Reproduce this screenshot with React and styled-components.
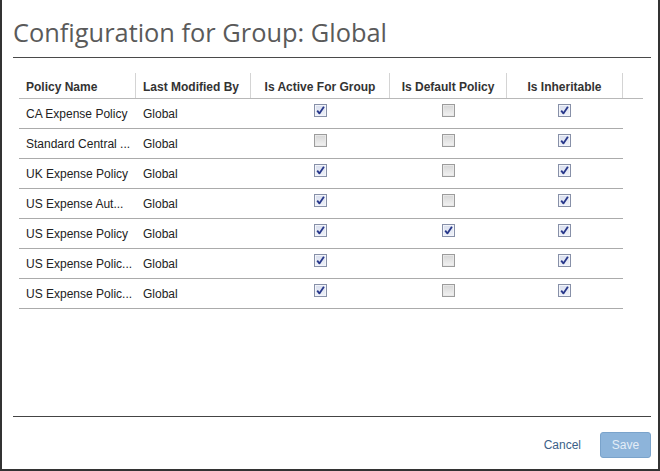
import React from "react";
import styled, { createGlobalStyle } from "styled-components";

const GlobalStyle = createGlobalStyle`
  html, body {
    margin: 0;
    padding: 0;
    background: #ffffff;
  }
  body {
    font-family: "Liberation Sans", Arial, sans-serif;
  }
`;

const COLS = "117px 115px 139px 117px 116px";

const policies = [
  { name: "CA Expense Policy", by: "Global", active: true, def: false, inherit: true },
  { name: "Standard Central ...", by: "Global", active: false, def: false, inherit: true },
  { name: "UK Expense Policy", by: "Global", active: true, def: false, inherit: true },
  { name: "US Expense Aut...", by: "Global", active: true, def: false, inherit: true },
  { name: "US Expense Policy", by: "Global", active: true, def: true, inherit: true },
  { name: "US Expense Polic...", by: "Global", active: true, def: false, inherit: true },
  { name: "US Expense Polic...", by: "Global", active: true, def: false, inherit: true },
];

const Dialog = styled.div`
  width: 660px;
  height: 471px;
  box-sizing: border-box;
  border: 2px solid #333333;
  border-top: 0;
  padding: 0 7px 0 11px;
  display: flex;
  flex-direction: column;
  background: #ffffff;
`;

const TitleBar = styled.div`
  padding: 15px 0 8px 0;
  border-bottom: 1px solid #4a4a4a;
`;

const Title = styled.h1`
  margin: 0;
  font-family: "Open Sans", "Noto Sans", sans-serif;
  font-weight: 400;
  font-size: 25.4px;
  line-height: 34px;
  color: #5a5a5a;
`;

const Table = styled.div`
  width: 624px;
  margin: 15px 0 0 6px;
`;

const HeaderRow = styled.div`
  display: grid;
  grid-template-columns: ${COLS} 20px;
  border-bottom: 1px solid #b8b8b8;
`;

const HeaderCell = styled.div`
  height: 25px;
  box-sizing: border-box;
  padding: 7px 7px 0;
  border-right: ${(p) => (p.$last ? "0" : "1px solid #d4d4d4")};
  font-size: 12px;
  line-height: 14px;
  font-weight: 700;
  color: #333333;
  text-align: ${(p) => (p.$center ? "center" : "left")};
  white-space: nowrap;
`;

const Row = styled.div`
  display: grid;
  grid-template-columns: ${COLS};
  width: 604px;
  height: 30px;
  box-sizing: border-box;
  border-bottom: 1px solid #ababab;
`;

const Cell = styled.div`
  padding: 0 7px;
  display: flex;
  align-items: center;
  font-size: 12px;
  line-height: 14px;
  color: #222222;
  white-space: nowrap;
`;

const CheckCell = styled.div`
  display: flex;
  justify-content: center;
  align-items: flex-start;
  padding-top: 5px;
  padding-right: 1px;
`;

const Box = styled.span`
  width: 13px;
  height: 13px;
  box-sizing: border-box;
  border: 1px solid ${(p) => (p.$checked ? "#8790a8" : "#9c9c9c")};
  background: ${(p) =>
    p.$checked
      ? "linear-gradient(#d9dfee, #eef1f8)"
      : "linear-gradient(#d6d6d6, #f2f2f2)"};
  box-shadow: inset 0 0 0 1px ${(p) => (p.$checked ? "#f2f4fa" : "#e8e8e8")};
  display: flex;
  align-items: center;
  justify-content: center;
`;

const CheckBox = ({ checked }) => (
  <Box $checked={checked}>
    {checked && (
      <svg width="9" height="9" viewBox="0 0 9 9">
        <path
          d="M1.2 4.6 L3.4 7.4 L7.9 0.8"
          fill="none"
          stroke="#27378a"
          strokeWidth="1.8"
          strokeLinejoin="round"
        />
      </svg>
    )}
  </Box>
);

const Spacer = styled.div`
  flex: 1;
`;

const Footer = styled.div`
  border-top: 1px solid #444444;
  padding: 15px 0 11px;
  display: flex;
  justify-content: flex-end;
  align-items: center;
  gap: 19px;
`;

const LinkButton = styled.button`
  border: 0;
  background: none;
  padding: 0;
  font-family: "Liberation Sans", Arial, sans-serif;
  font-size: 12px;
  color: #3c5f88;
  cursor: pointer;
`;

const SaveButton = styled.button`
  width: 51px;
  height: 26px;
  border: 1px solid #7aa3cb;
  border-radius: 3px;
  background: #8db4da;
  color: #e4edf7;
  font-family: "Liberation Sans", Arial, sans-serif;
  font-size: 12px;
  padding: 0;
`;

const App = () => {
  return (
    <>
      <GlobalStyle />
      <Dialog>
        <TitleBar>
          <Title>Configuration for Group: Global</Title>
        </TitleBar>
        <Table>
          <HeaderRow>
            <HeaderCell>Policy Name</HeaderCell>
            <HeaderCell>Last Modified By</HeaderCell>
            <HeaderCell $center>Is Active For Group</HeaderCell>
            <HeaderCell $center>Is Default Policy</HeaderCell>
            <HeaderCell $center>Is Inheritable</HeaderCell>
            <HeaderCell $last />
          </HeaderRow>
          {policies.map((p, i) => (
            <Row key={i}>
              <Cell>{p.name}</Cell>
              <Cell>{p.by}</Cell>
              <CheckCell>
                <CheckBox checked={p.active} />
              </CheckCell>
              <CheckCell>
                <CheckBox checked={p.def} />
              </CheckCell>
              <CheckCell>
                <CheckBox checked={p.inherit} />
              </CheckCell>
            </Row>
          ))}
        </Table>
        <Spacer />
        <Footer>
          <LinkButton>Cancel</LinkButton>
          <SaveButton disabled>Save</SaveButton>
        </Footer>
      </Dialog>
    </>
  );
};

export default App;
